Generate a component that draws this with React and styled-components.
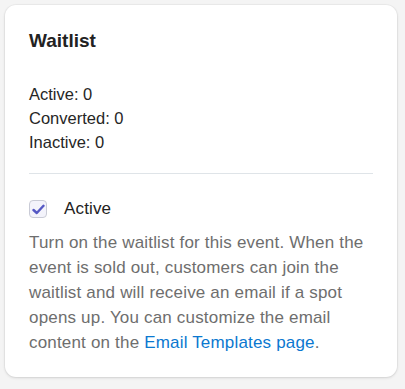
import React, { useState } from "react";
import styled, { createGlobalStyle } from "styled-components";

const GlobalStyle = createGlobalStyle`
  html, body {
    margin: 0;
    padding: 0;
    background: #f4f4f4;
  }
  body {
    font-family: "Liberation Sans", Arial, Helvetica, sans-serif;
  }
`;

const Page = styled.div`
  padding: 5px 8px 12px 5px;
`;

const Card = styled.section`
  background: #ffffff;
  border-radius: 11px;
  box-shadow: 0 1px 3px rgba(0, 0, 0, 0.12), 0 0 0 1px rgba(0, 0, 0, 0.03);
  padding: 25px 24px 22px 24px;
  width: 392px;
  box-sizing: border-box;
`;

const Title = styled.h2`
  margin: 0;
  font-size: 19px;
  line-height: 22px;
  font-weight: 700;
  color: #222222;
`;

const Stats = styled.ul`
  list-style: none;
  margin: 30px 0 0 0;
  padding: 0;
  li {
    font-size: 16.5px;
    line-height: 24px;
    color: #262626;
  }
`;

const Divider = styled.hr`
  border: none;
  border-top: 1px solid #dfe4e8;
  margin: 19px 0 0 0;
`;

const CheckRow = styled.label`
  display: flex;
  align-items: center;
  gap: 17px;
  margin-top: 25px;
  cursor: pointer;
  font-size: 17px;
  letter-spacing: 0.15px;
  color: #222222;
`;

const Box = styled.span`
  width: 18px;
  height: 18px;
  box-sizing: border-box;
  border: 1px solid #c9cbd6;
  border-radius: 4px;
  background: ${p => (p.checked ? "#f3f3fb" : "#ffffff")};
  display: flex;
  align-items: center;
  justify-content: center;
  svg {
    display: ${p => (p.checked ? "block" : "none")};
  }
`;

const Description = styled.p`
  margin: 11px 0 0 0;
  font-size: 17px;
  letter-spacing: 0.18px;
  line-height: 25px;
  color: #6e6e6e;
  a {
    color: #0b78d0;
    text-decoration: none;
  }
`;

export default function App() {
  const [active, setActive] = useState(true);

  return (
    <>
      <GlobalStyle />
      <Page>
        <Card>
          <Title>Waitlist</Title>
          <Stats>
            <li>Active: 0</li>
            <li>Converted: 0</li>
            <li>Inactive: 0</li>
          </Stats>
          <Divider />
          <CheckRow onClick={() => setActive(!active)}>
            <Box checked={active}>
              <svg width="13" height="11" viewBox="0 0 13 11">
                <path d="M1.5 6 L4.8 9 L11.5 1.8" fill="none" stroke="#5558c4" strokeWidth="2.4" strokeLinecap="round" strokeLinejoin="round" />
              </svg>
            </Box>
            Active
          </CheckRow>
          <Description>
            Turn on the waitlist for this event. When the event is sold out, customers can join the waitlist and will receive an email if a spot opens up. You can customize the email content on the <a href="#">Email Templates page</a>.
          </Description>
        </Card>
      </Page>
    </>
  );
}
